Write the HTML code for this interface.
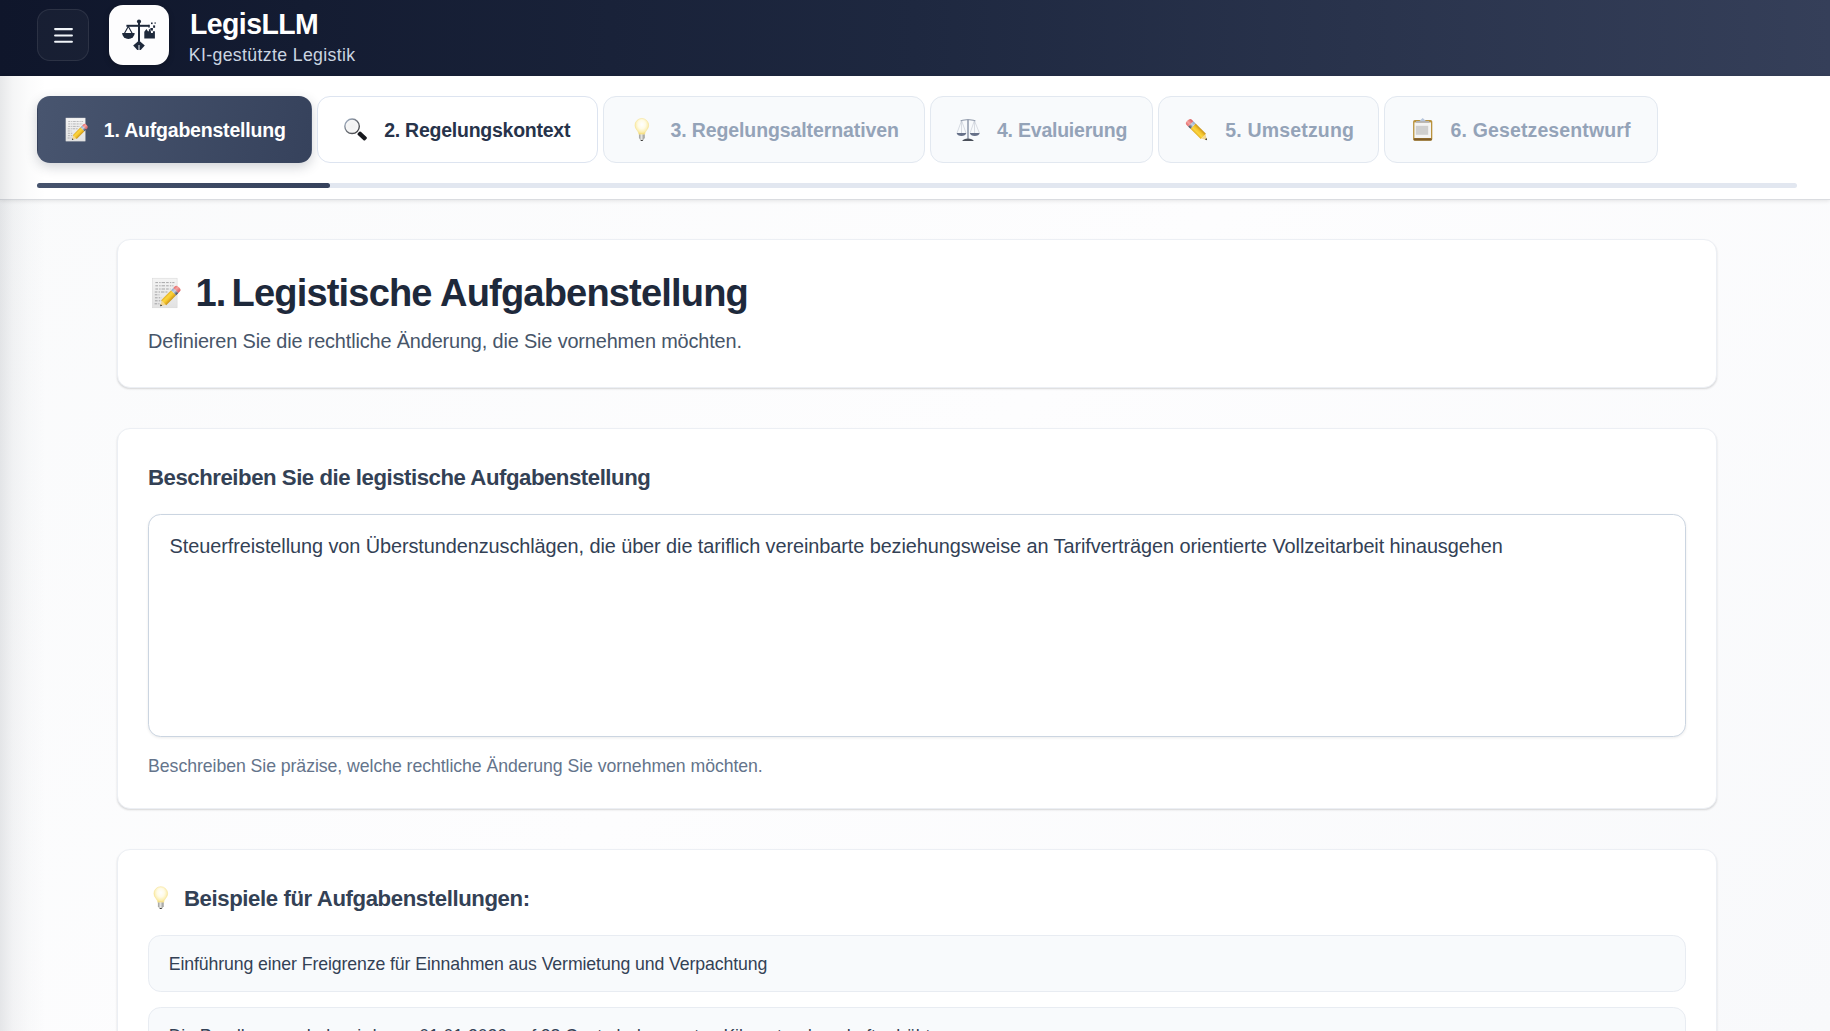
<!DOCTYPE html>
<html lang="de">
<head>
<meta charset="utf-8">
<title>LegisLLM</title>
<style>
*{box-sizing:border-box;margin:0;padding:0}
html,body{width:1830px;height:1031px;overflow:hidden;background:#fafbfc}
body{background:linear-gradient(135deg,#f9fafb 0%,#fdfdfe 50%,#f8f9fb 100%)}
body{font-family:"Liberation Sans",sans-serif;position:relative;color:#1e293b}
.abs{position:absolute}
.t{position:absolute;white-space:nowrap;line-height:1;}
#hdr{left:0;top:0;width:1830px;height:75.5px;background:linear-gradient(90deg,#0f162b 0%,#1e2840 50%,#353f59 100%)}
#menu{left:37px;top:9px;width:52px;height:52px;border-radius:13px;background:rgba(255,255,255,.035);border:1px solid rgba(255,255,255,.085)}
#logo{left:109px;top:5px;width:60px;height:60px;border-radius:14px;background:#fdfdfe;box-shadow:0 2px 6px rgba(0,0,0,.2)}
#nav{left:0;top:75.5px;width:1830px;height:124.5px;background:#fff;border-bottom:1px solid #dadce0;box-shadow:0 1px 4px rgba(0,0,0,.10)}
.tab{position:absolute;top:96px;height:66.5px;border-radius:13px;border:1px solid #e2e8f0;background:#f8fafc}
.tab.on{background:linear-gradient(100deg,#48556f,#36425c);border-color:transparent;box-shadow:0 4px 12px rgba(40,50,70,.22)}
.tab.next{background:#fff;border-color:#dde4f0}
.tt{font-weight:bold;color:#94a3b8}
#track{left:37px;top:183.1px;width:1760px;height:4.9px;border-radius:3px;background:#e2e7f0}
#fill{left:37px;top:183.1px;width:293px;height:4.9px;border-radius:3px;background:linear-gradient(90deg,#46536d,#36425c)}
.card{position:absolute;left:117px;width:1599.6px;background:#fff;border:1px solid #eceff4;border-radius:13px;box-shadow:0 1.5px 2px -0.5px rgba(0,0,0,.13),0 1px 3px rgba(0,0,0,.03)}
#ta{left:148px;top:514.2px;width:1538px;height:223.2px;border:1px solid #cbd5e1;border-radius:12.6px;background:#fff;box-shadow:0 1px 3px rgba(0,0,0,.08)}
.ex{position:absolute;left:148.2px;width:1538px;height:56.8px;border:1px solid #e8ecf2;border-radius:12.6px;background:#f8fafc}
#edge{left:0;top:75.5px;width:46px;height:956px;background:linear-gradient(90deg,rgba(70,78,90,.13) 0%,rgba(70,78,90,.055) 28%,rgba(70,78,90,.018) 62%,rgba(70,78,90,0) 100%)}
</style>
</head>
<body>
<div id="hdr" class="abs"></div>
<div id="menu" class="abs"></div>
<div id="logo" class="abs"></div>
<svg class="abs" style="left:37px;top:9px" width="52" height="52" viewBox="37 9 52 52"><g stroke="#f1f5f9" stroke-width="2.1" stroke-linecap="round"><line x1="55.1" y1="29.1" x2="71.9" y2="29.1"/><line x1="55.1" y1="35.5" x2="71.9" y2="35.5"/><line x1="55.1" y1="41.8" x2="71.9" y2="41.8"/></g></svg>
<svg class="abs" style="left:109px;top:5px" width="60" height="60" viewBox="109 5 60 60"><g fill="#1e293b" stroke="none">
<circle cx="139" cy="21.5" r="2.05"/>
<rect x="138" y="21.5" width="2" height="20"/>
<rect x="126.4" y="24.8" width="23.2" height="2"/>
<rect x="148.4" y="24.8" width="1.2" height="2.9"/>
<path d="M122.1 32.9h12.6a6.3 6.1 0 0 1-12.6 0z"/>
<path d="M128.3 25.2l-4.3 7.9 1 .5 3.3-6.1 3.3 6.1 1-.5z"/>
<path d="M144.3 38.6v-6.8l2.2-2.9 1.4 2.3h1v-1.9h1.5v1.9h.6v1.7h1.9v-1.7h2v7.4z"/>
<rect x="150.4" y="28" width="2.5" height="2.6"/>
<rect x="153.1" y="25.4" width="2" height="2.4"/>
<rect x="151" y="22.5" width="1.6" height="1.6"/>
<rect x="154.5" y="22.4" width="1.3" height="1.3"/>
<path d="M139 40.4l5.8 5-4.1 4.7h-3.4l-4.1-4.7z"/>
</g><rect x="138.3" y="44.9" width="1.4" height="5.3" rx=".6" fill="#b6bcc6"/></svg>
<div id="t_title" class="t" style="left:189.5px;top:9.1px;font-weight:bold;color:#fff;font-size:30.3px;letter-spacing:-0.6px;transform:scaleX(.938);transform-origin:0 0">LegisLLM</div>
<div id="t_sub" class="t" style="left:188.8px;top:47.0px;color:#cbd5e1;font-size:17.7px;letter-spacing:0.355px">KI-gestützte Legistik</div>

<div id="nav" class="abs"></div>
<div class="tab on" style="left:37px;width:275px"></div>
<div class="tab next" style="left:317.4px;width:280.6px"></div>
<div class="tab" style="left:603.4px;width:321.3px"></div>
<div class="tab" style="left:930px;width:222.7px"></div>
<div class="tab" style="left:1158.2px;width:220.8px"></div>
<div class="tab" style="left:1384.4px;width:273.6px"></div>
<div id="t_tab1" class="t tt" style="left:103.8px;top:121.1px;color:#fff;font-size:19.5px;letter-spacing:-0.2px">1. Aufgabenstellung</div>
<div id="t_tab2" class="t tt" style="left:384.2px;top:121.1px;color:#27334a;font-size:19.5px;letter-spacing:-0.25px">2. Regelungskontext</div>
<div id="t_tab3" class="t tt" style="left:670.4px;top:121.1px;font-size:19.5px;letter-spacing:-0.1px">3. Regelungsalternativen</div>
<div id="t_tab4" class="t tt" style="left:997.0px;top:121.1px;font-size:19.5px;letter-spacing:-0.23px">4. Evaluierung</div>
<div id="t_tab5" class="t tt" style="left:1225.2px;top:121.1px;font-size:19.5px;letter-spacing:0.18px">5. Umsetzung</div>
<div id="t_tab6" class="t tt" style="left:1450.6px;top:121.1px;font-size:19.5px;letter-spacing:0.13px">6. Gesetzesentwurf</div>
<div id="track" class="abs"></div>
<div id="fill" class="abs"></div>

<div class="card" style="top:239.2px;height:149.2px"></div>
<div id="t_h1" class="t" style="left:195.5px;top:274.2px;font-weight:bold;color:#1e293b;font-size:38.1px;letter-spacing:-0.85px">1.<span style="letter-spacing:-4.6px"> </span>Legistische Aufgabenstellung</div>
<div id="t_p1" class="t" style="left:148.0px;top:331.6px;color:#475569;font-size:19.9px;letter-spacing:-0.15px">Definieren Sie die rechtliche Änderung, die Sie vornehmen möchten.</div>

<div class="card" style="top:428.2px;height:381px"></div>
<div id="t_label" class="t" style="left:148.0px;top:466.8px;font-weight:bold;color:#334155;font-size:22.2px;letter-spacing:-0.46px">Beschreiben Sie die legistische Aufgabenstellung</div>
<div id="ta" class="abs"></div>
<div id="t_ta" class="t" style="left:169.6px;top:537.2px;color:#334155;font-size:19.9px;letter-spacing:-0.08px">Steuerfreistellung von Überstundenzuschlägen, die über die tariflich vereinbarte beziehungsweise an Tarifverträgen orientierte Vollzeitarbeit hinausgehen</div>
<div id="t_help" class="t" style="left:148.1px;top:758.1px;color:#64748b;font-size:17.7px;letter-spacing:-0.065px">Beschreiben Sie präzise, welche rechtliche Änderung Sie vornehmen möchten.</div>

<div class="card" style="top:848.8px;height:400px"></div>
<div id="t_h3" class="t" style="left:184.0px;top:888.2px;font-weight:bold;color:#334155;font-size:22.2px;letter-spacing:-0.41px">Beispiele für Aufgabenstellungen:</div>
<div class="ex" style="top:934.9px"></div>
<div id="t_ex1" class="t" style="left:168.7px;top:956.1px;color:#334155;font-size:17.7px;letter-spacing:-0.1px">Einführung einer Freigrenze für Einnahmen aus Vermietung und Verpachtung</div>
<div class="ex" style="top:1007px"></div>
<div id="t_ex2" class="t" style="left:168.7px;top:1028.2px;color:#334155;font-size:17.7px;letter-spacing:-0.1px">Die Pendlerpauschale wird zum 01.01.2026 auf 38 Cent ab dem ersten Kilometer dauerhaft erhöht</div>

<svg class="abs" style="left:0;top:0;pointer-events:none" width="1830" height="1031" viewBox="0 0 1830 1031"><defs>
<linearGradient id="gPaper" x1="0" y1="0" x2="0" y2="1"><stop offset="0" stop-color="#f4f4f4"/><stop offset="1" stop-color="#e2e2e2"/></linearGradient>
<linearGradient id="gPen" x1="0" y1="0" x2="0" y2="1"><stop offset="0" stop-color="#e2ad22"/><stop offset=".3" stop-color="#fbd640"/><stop offset=".62" stop-color="#f5c42c"/><stop offset="1" stop-color="#c9941a"/></linearGradient>
<linearGradient id="gEr" x1="0" y1="0" x2="0" y2="1"><stop offset="0" stop-color="#e46a6a"/><stop offset=".4" stop-color="#f6a3a0"/><stop offset="1" stop-color="#d95c5c"/></linearGradient>
<linearGradient id="gFe" x1="0" y1="0" x2="0" y2="1"><stop offset="0" stop-color="#8ea6c6"/><stop offset=".45" stop-color="#c5d3e6"/><stop offset="1" stop-color="#3d434f"/></linearGradient>
<radialGradient id="gBulb" cx=".5" cy=".38" r=".6"><stop offset="0" stop-color="#ffffff"/><stop offset=".45" stop-color="#fffbe6"/><stop offset=".8" stop-color="#fbeeb0"/><stop offset="1" stop-color="#f5dc78"/></radialGradient>
<linearGradient id="gBase" x1="0" y1="0" x2="1" y2="0"><stop offset="0" stop-color="#9a9a96"/><stop offset=".45" stop-color="#e4e4e0"/><stop offset="1" stop-color="#8c8c88"/></linearGradient>
<linearGradient id="gRing" x1="0" y1="0" x2="1" y2="1"><stop offset="0" stop-color="#a9b9cf"/><stop offset=".5" stop-color="#6b6f76"/><stop offset="1" stop-color="#3a3a3c"/></linearGradient>
<radialGradient id="gGlass" cx=".5" cy=".5" r=".5"><stop offset="0" stop-color="#f1f1f1"/><stop offset=".8" stop-color="#f6f6f6"/><stop offset="1" stop-color="#ffffff"/></radialGradient>
<g id="pencil">
<path d="M0 0L5.2 -2.9V2.9Z" fill="#f4d78f"/>
<path d="M0 0L1.9 -1.05V1.05Z" fill="#2a2a2e"/>
<rect x="5.2" y="-3.6" width="14.3" height="7.2" fill="url(#gPen)"/>
<rect x="19.5" y="-3.6" width="3.2" height="7.2" fill="url(#gFe)"/>
<path d="M22.7 -3.6h2.4a2.2 3.6 0 0 1 0 7.2h-2.4z" fill="url(#gEr)"/>
</g>
<linearGradient id="gFe2" x1="0" y1="1" x2="0" y2="0"><stop offset="0" stop-color="#8ea6c6"/><stop offset=".45" stop-color="#c5d3e6"/><stop offset="1" stop-color="#3d434f"/></linearGradient>
<g id="pencil2">
<path d="M0 0L5.2 -2.9V2.9Z" fill="#f4d78f"/>
<path d="M0 0L1.9 -1.05V1.05Z" fill="#2a2a2e"/>
<rect x="5.2" y="-3.6" width="14.3" height="7.2" fill="url(#gPen)"/>
<rect x="19.5" y="-3.6" width="3.2" height="7.2" fill="url(#gFe2)"/>
<path d="M22.7 -3.6h2.4a2.2 3.6 0 0 1 0 7.2h-2.4z" fill="url(#gEr)"/>
</g>
<g id="memo">
<rect x="0" y="0" width="24.7" height="29.6" fill="url(#gPaper)" stroke="#d4d4d4" stroke-width=".5"/>
<g stroke="#6d6d72" stroke-width=".75" opacity=".75" stroke-dasharray="2.6 1.2 1.4 1 3.4 1.1">
<line x1="3" y1="4.4" x2="22" y2="4.4"/><line x1="3" y1="7.6" x2="21" y2="7.6"/><line x1="3" y1="10.8" x2="18" y2="10.8"/><line x1="2.4" y1="13.8" x2="15" y2="13.8"/><line x1="2.4" y1="16.6" x2="7" y2="16.6"/><line x1="2.6" y1="19.6" x2="9" y2="19.6"/><line x1="2.6" y1="22.6" x2="9.5" y2="22.6"/><line x1="2.2" y1="25.6" x2="7" y2="25.6"/>
</g>
<use href="#pencil" transform="translate(7.7 28.1) rotate(-45.3) scale(.985)"/>
</g>
<g id="bulb">
<path d="M-2.9 9.1C-2.9 5.6 -6.85 4.2 -6.85 0A6.85 6.85 0 1 1 6.85 0C6.85 4.2 2.9 5.6 2.9 9.1Z" fill="url(#gBulb)" stroke="#f4df8a" stroke-width=".5"/>
<path d="M-2.85 9.1h5.7v3.6l-1.5 2.2h-2.7l-1.5 -2.2z" fill="url(#gBase)"/>
<path d="M-1.4 14.6h2.8l-.7 1h-1.4z" fill="#3c3c3a"/>
</g>
</defs>
<use href="#memo" transform="translate(65.9 118) scale(.781)"/>
<use href="#memo" transform="translate(152.4 278.2)"/>
<!-- magnifier -->
<rect x="-1.2" y="-2.2" width="10.2" height="4.4" rx="1.3" fill="#17181d" transform="translate(359.3 133.4) rotate(42)"/>
<circle cx="352.07" cy="126.27" r="7.25" fill="url(#gGlass)" stroke="url(#gRing)" stroke-width="1.4"/>
<!-- bulbs -->
<use href="#bulb" transform="translate(641.8 125.3)"/>
<use href="#bulb" transform="translate(160.76 893.5)"/>
<!-- scales -->
<g fill="none" stroke="#aeb6c2" stroke-width=".45">
<path d="M961.6 120.6L957 133M961.6 120.6L966 133M961.6 120.6L961.5 133"/>
<path d="M974.4 120.6L970.1 133M974.4 120.6L979.4 133M974.4 120.6L974.6 133"/>
</g>
<path d="M960.4 120.4c3-1 5.6-1.2 7.6-1.2s4.600 .2 7.600 1.200l-.2 .8c-3-.8-5.400-.9-7.400-.9s-4.400 .1-7.400 .9z" fill="#8d97a8"/>
<rect x="967.2" y="119.2" width="1.6" height="19.6" fill="#949eaf"/>
<path d="M962.2 141c.6-1.800 3.200-2.400 5.800-2.600 2.600 .2 5.200 .8 5.800 2.600z" fill="#4a4f5a"/>
<path d="M956.600 133h9.700c-.3 1.900-2.400 2.900-4.850 2.900s-4.550-1-4.850-2.900z" fill="#667088"/>
<path d="M969.800 133h9.900c-.3 1.900-2.450 2.900-4.950 2.900s-4.650-1-4.950-2.900z" fill="#667088"/>
<!-- pencil -->
<use href="#pencil2" transform="translate(1207.100 140.200) rotate(-135) scale(1.02)"/>
<!-- clipboard -->
<rect x="1413.100" y="120" width="19.200" height="20.800" rx="1.700" fill="#b9923c"/>
<rect x="1413.600" y="138.200" width="18.200" height="2.400" rx="1" fill="#7f5c2a"/>
<rect x="1414.400" y="122.400" width="16.600" height="15.600" fill="#f4f4f4"/>
<rect x="1415.800" y="125.800" width="12.400" height="9" fill="#cfcfcf"/>
<path d="M1422.700 118.100l3.200 3h-6.400z" fill="#b7c6dc"/>
<rect x="1416" y="120.900" width="13.300" height="1.900" rx=".4" fill="#b3b3b6"/>
</svg>
<div id="edge" class="abs"></div>
</body>
</html>
